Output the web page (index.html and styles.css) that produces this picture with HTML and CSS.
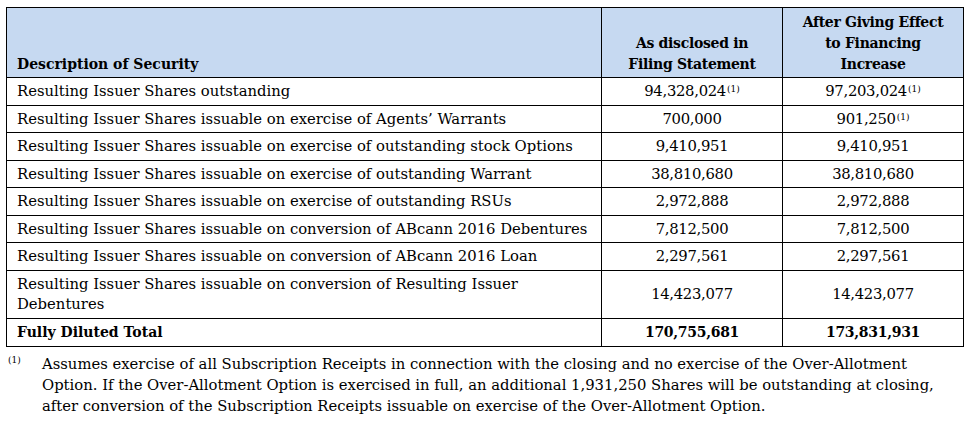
FILE: index.html
```html
<!DOCTYPE html>
<html>
<head>
<meta charset="utf-8">
<link rel="stylesheet" href="styles.css">
</head>
<body>
<div class="page">
<table class="cap">
  <colgroup><col class="c1"><col class="c2"><col class="c3"></colgroup>
  <thead>
    <tr>
      <th class="desc">Description of Security</th>
      <th class="num">As disclosed in<br>Filing Statement</th>
      <th class="num">After Giving Effect<br>to Financing<br>Increase</th>
    </tr>
  </thead>
  <tbody>
    <tr><td>Resulting Issuer Shares outstanding</td><td class="num">94,328,024<sup>(1)</sup></td><td class="num">97,203,024<sup>(1)</sup></td></tr>
    <tr><td>Resulting Issuer Shares issuable on exercise of Agents’ Warrants</td><td class="num">700,000</td><td class="num">901,250<sup>(1)</sup></td></tr>
    <tr><td>Resulting Issuer Shares issuable on exercise of outstanding stock Options</td><td class="num">9,410,951</td><td class="num">9,410,951</td></tr>
    <tr><td>Resulting Issuer Shares issuable on exercise of outstanding Warrant</td><td class="num">38,810,680</td><td class="num">38,810,680</td></tr>
    <tr><td>Resulting Issuer Shares issuable on exercise of outstanding RSUs</td><td class="num">2,972,888</td><td class="num">2,972,888</td></tr>
    <tr><td>Resulting Issuer Shares issuable on conversion of ABcann 2016 Debentures</td><td class="num">7,812,500</td><td class="num">7,812,500</td></tr>
    <tr><td>Resulting Issuer Shares issuable on conversion of ABcann 2016 Loan</td><td class="num">2,297,561</td><td class="num">2,297,561</td></tr>
    <tr class="tall"><td>Resulting Issuer Shares issuable on conversion of Resulting Issuer<br>Debentures</td><td class="num">14,423,077</td><td class="num">14,423,077</td></tr>
    <tr class="total"><td>Fully Diluted Total</td><td class="num">170,755,681</td><td class="num">173,831,931</td></tr>
  </tbody>
</table>
<div class="note">
  <span class="mark">(1)</span>
  <p class="note-text">Assumes exercise of all Subscription Receipts in connection with the closing and no exercise of the Over-Allotment Option. If the Over-Allotment Option is exercised in full, an additional 1,931,250 Shares will be outstanding at closing, after conversion of the Subscription Receipts issuable on exercise of the Over-Allotment Option.</p>
</div>
</div>
</body>
</html>
```
FILE: styles.css
```css
html, body {
  margin: 0;
  padding: 0;
  background: #fff;
}
body {
  font-family: "DejaVu Serif", "Liberation Serif", serif;
  font-size: 14.8px;
  color: #000;
}
.page {
  padding: 7px 8px 0 6px;
}
.cap {
  border-collapse: collapse;
  width: 958px;
  table-layout: fixed;
}
.c1 { width: 595px; }
.c2 { width: 181px; }
.c3 { width: 181px; }
.cap th, .cap td {
  border: 1px solid #000;
  padding: 0 10px;
  line-height: 20px;
}
.cap thead th {
  background: #c6d9f1;
  font-weight: bold;
  font-size: 14px;
  vertical-align: bottom;
  height: 62px;
  line-height: 21px;
  padding-top: 4px;
  padding-bottom: 2px;
}
.cap th.desc { text-align: left; }
.cap .num {
  text-align: center;
  letter-spacing: -0.3px;
}
.cap tbody td {
  height: 26.5px;
  padding-top: 0;
  padding-bottom: 0;
  vertical-align: middle;
}
.cap tr.tall td { height: 47px; }
.cap tr.total td {
  font-weight: bold;
  font-size: 14px;
  height: 27px;
}
sup {
  font-size: 9px;
  line-height: 0;
  vertical-align: 4px;
  margin-left: 1px;
  letter-spacing: 0;
}
.note {
  display: flex;
  margin-top: 6px;
  padding-left: 2px;
}
.mark {
  font-size: 9px;
  width: 34px;
  flex: none;
  line-height: 14px;
}
.note-text {
  margin: 0;
  width: 900px;
  line-height: 21px;
}
```
